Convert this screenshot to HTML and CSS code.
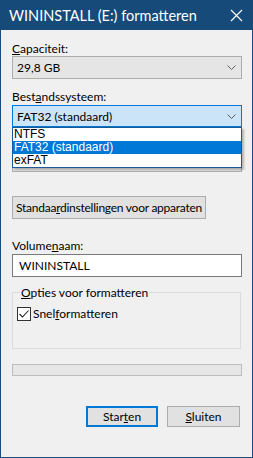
FILE: index.html
```html
<!DOCTYPE html>
<html lang="nl">
<head>
    <meta charset="UTF-8">
    <meta name="viewport" content="width=device-width, initial-scale=1.0">
    <title>WININSTALL (E:) formatteren</title>
    <link rel="stylesheet" href="styles.css">
</head>
<body>
    <div class="window">
        <div class="titlebar">
            <span class="title">WININSTALL (E:) formatteren</span>
            <svg class="close" width="13" height="13" viewBox="0 0 13 13">
                <path d="M1 1 L12 12 M12 1 L1 12" stroke="#fff" stroke-width="1.2" fill="none"/>
            </svg>
        </div>

        <div class="content">
            <div class="label first"><u>C</u>apaciteit:</div>
            <div class="combo">
                <span>29,8 GB</span>
                <svg class="chevron" width="9" height="5" viewBox="0 0 9 5"><path d="M0.5 0.5 L4.5 4.5 L8.5 0.5" stroke="#606060" fill="none"/></svg>
            </div>

            <div class="label second">Best<u>a</u>ndssysteem:</div>
            <div class="combo-wrap">
                <div class="combo active">
                    <span>FAT32 (standaard)</span>
                    <svg class="chevron" width="9" height="5" viewBox="0 0 9 5"><path d="M0.5 0.5 L4.5 4.5 L8.5 0.5" stroke="#606060" fill="none"/></svg>
                </div>
                <ul class="dropdown">
                    <li>NTFS</li>
                    <li class="selected">FAT32 (standaard)</li>
                    <li>exFAT</li>
                </ul>
            </div>

            <!-- toewijzingseenheid: label and box sit under the open list -->
            <div class="label third"></div>
            <div class="combo"></div>

            <button class="btn defaults">Standaa<u>r</u>dinstellingen voor apparaten</button>

            <div class="label volume">Volume<u>n</u>aam:</div>
            <div class="textbox">WININSTALL</div>

            <fieldset class="group">
                <legend><u>O</u>pties voor formatteren</legend>
                <div class="check-row">
                    <svg class="checkbox" width="14" height="14" viewBox="0 0 14 14">
                        <rect x="0.5" y="0.5" width="13" height="13" fill="#fff" stroke="#333"/>
                        <path d="M2.5 7 L5.5 10 L11.5 3.5" stroke="#222" stroke-width="1.1" fill="none"/>
                    </svg>
                    <span>Snel<u>f</u>ormatteren</span>
                </div>
            </fieldset>

            <div class="progress"></div>

            <div class="actions">
                <button class="btn primary">Star<u>t</u>en</button>
                <button class="btn close-btn"><u>S</u>luiten</button>
            </div>
        </div>
    </div>
</body>
</html>
```

FILE: styles.css
```css
body {
    margin: 0;
    padding: 0;
    font-family: Lato, "Noto Sans", sans-serif;
    font-size: 12px;
    color: #000;
}

.window {
    width: 253px;
    height: 458px;
    background-color: #f0f0f0;
}

.titlebar {
    height: 30px;
    background-color: #154a79;
    color: white;
    display: flex;
    align-items: center;
    justify-content: space-between;
    padding: 0 10px 0 9px;
    box-sizing: border-box;
}

.title {
    font-size: 14.5px;
}

.content {
    height: 428px;
    border: 1px solid #1d4d7c;
    border-top: none;
    padding: 0 10px 0 11px;
    box-sizing: border-box;
}

.label {
    line-height: 15px;
    height: 15px;
}

.label.first {
    padding-top: 11px;
}

.label.second {
    margin-top: 10px;
    margin-bottom: 1px;
}

.label.third {
    margin-top: 7px;
}

.label.volume {
    margin-top: 19px;
    margin-bottom: 1px;
}

.combo {
    height: 23px;
    border: 1px solid #adadad;
    background-color: #e5e5e5;
    box-sizing: border-box;
    display: flex;
    align-items: center;
    justify-content: space-between;
    padding: 0 5px 0 4px;
}

.combo.active {
    height: 22px;
    background-color: #cce4f7;
    border-color: #0078d7;
}

.combo-wrap {
    position: relative;
}

.dropdown {
    position: absolute;
    left: 0;
    right: 0;
    top: 22px;
    margin: 0;
    padding: 0;
    list-style-type: none;
    background-color: white;
    border: 1px solid #1b5a96;
    box-shadow: 2px 2px 2px rgba(0, 0, 0, 0.25);
    font-family: "Liberation Sans", Arial, sans-serif;
    font-size: 12px;
    z-index: 2;
}

.dropdown li {
    height: 13px;
    line-height: 13px;
    padding-left: 1px;
}

.dropdown li.selected {
    background-color: #0078d7;
    color: white;
}

.btn {
    font-family: inherit;
    font-size: 12px;
    background-color: #e1e1e1;
    border: 1px solid #adadad;
    padding: 0;
    color: #000;
    white-space: nowrap;
}

.btn.defaults {
    display: block;
    margin-top: 24px;
    width: 194px;
    height: 23px;
    letter-spacing: -0.25px;
}

.textbox {
    height: 23px;
    line-height: 21px;
    border: 1px solid #7a7a7a;
    background-color: white;
    box-sizing: border-box;
    padding-left: 6px;
}

.group {
    margin: 8px 1px 0 0;
    padding: 6px 0 0 4px;
    height: 64px;
    border: 1px solid #dcdcdc;
    box-sizing: border-box;
    min-width: 0;
}

.group legend {
    padding: 0 1px;
    margin-left: 3px;
    line-height: 15px;
}

.check-row {
    display: flex;
    align-items: center;
    gap: 2px;
}

.progress {
    margin-top: 15px;
    height: 12px;
    border: 1px solid #bcbcbc;
    background-color: #e6e6e6;
    box-sizing: border-box;
}

.actions {
    display: flex;
    justify-content: flex-end;
    gap: 9px;
    margin-top: 30px;
    padding-right: 2px;
}

.btn.primary {
    width: 72px;
    height: 21px;
    border: 2px solid #0078d7;
}

.btn.close-btn {
    width: 73px;
    height: 21px;
}
```
